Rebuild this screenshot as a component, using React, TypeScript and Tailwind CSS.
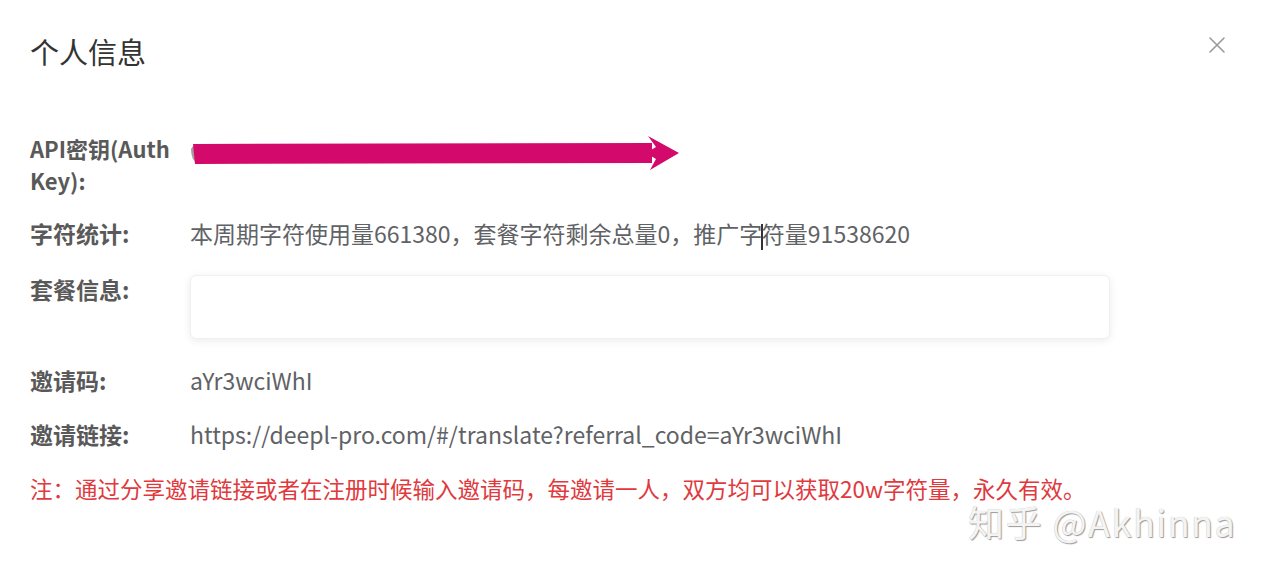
import React from "react";

const font = { fontFamily: '"Noto Sans CJK SC", "Noto Sans", sans-serif' };

function Row({
  label,
  children,
  className = "",
  labelClass = "text-[23px] leading-[30px]",
}: {
  label: React.ReactNode;
  children?: React.ReactNode;
  className?: string;
  labelClass?: string;
}) {
  return (
    <div className={`flex items-start ${className}`}>
      <div className={`w-[160px] shrink-0 font-bold text-[#595959] ${labelClass}`}>{label}</div>
      <div className="flex-1 text-[23px] leading-[30px] text-[#606266]">{children}</div>
    </div>
  );
}

function CloseIcon() {
  return (
    <svg width="18" height="18" viewBox="0 0 18 18" fill="none" stroke="#9a9a9a" strokeWidth="1.6" strokeLinecap="round">
      <path d="M2 2 L16 16 M16 2 L2 16" />
    </svg>
  );
}

// scribble over the redacted key
function Redacted() {
  return (
    <svg width="490" height="36" viewBox="0 0 490 36" className="mt-[4px]">
      <path d="M1 13 Q3 8 12 8 L460 9 L460 22 L8 27 Q1 25 1 13 Z" fill="#5a3346" opacity="0.5" />
      <path d="M3 8 L462 7 L462 27 L5 28 Z" fill="#d30a6c" />
      <path d="M458 0 L489 17 L460 34 L466 23 L456 17 L466 11 Z" fill="#d30a6c" />
    </svg>
  );
}

export default function App() {
  return (
    <div className="relative w-[1268px] h-[573px] bg-white overflow-hidden" style={font}>
      <div className="flex items-start justify-between pl-[30px] pr-[42px] pt-[33px]">
        <h2 className="text-[29px] leading-[36px] font-normal text-[#333333]">个人信息</h2>
        <div className="pt-[3px]">
          <CloseIcon />
        </div>
      </div>

      <div className="flex flex-col pl-[30px] pt-[63px]">
        <Row
          label={<><div>API密钥(Auth</div><div>Key):</div></>}
          labelClass="text-[22px] leading-[32px]"
        >
          <Redacted />
        </Row>

        <Row label="字符统计:" className="mt-[22px]">
          本周期字符使用量661380，套餐字符剩余总量0，推广字
          <span className="inline-block w-[1.5px] h-[26px] bg-[#333] align-middle mx-[-1px]" />
          符量91538620
        </Row>

        <Row label="套餐信息:" className="mt-[24px]">
          <div className="w-[920px] h-[64px] rounded-md border border-[#f0f0f0] bg-white shadow-[0_2px_8px_rgba(0,0,0,0.08)] mt-[1px]" />
        </Row>

        <Row label="邀请码:" className="mt-[26px]">
          aYr3wciWhI
        </Row>

        <Row label="邀请链接:" className="mt-[24px]">
          https://deepl-pro.com/#/translate?referral_code=aYr3wciWhI
        </Row>

        <p className="mt-[24px] text-[22.5px] leading-[30px] text-[#e0393e]">
          注：通过分享邀请链接或者在注册时候输入邀请码，每邀请一人，双方均可以获取20w字符量，永久有效。
        </p>
      </div>

      <div
        className="absolute left-[968px] top-[498px] text-[36px] leading-[46px] text-[#f4f4f4] tracking-[1.5px]"
        style={{ textShadow: "1px 1px 1px #9a9a9a, 0 0 1px #bdbdbd" }}
      >
        知乎 @Akhinna
      </div>
    </div>
  );
}
